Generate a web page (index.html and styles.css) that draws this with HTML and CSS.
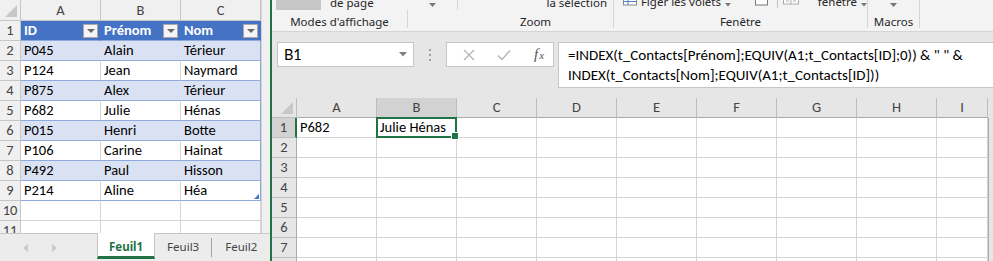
FILE: index.html
```html
<!DOCTYPE html>
<html lang="fr">
<head>
  <meta charset="UTF-8" />
  <meta name="viewport" content="width=device-width, initial-scale=1.0" />
  <title>t_Contacts - Excel</title>
  <link rel="stylesheet" href="styles.css">
</head>
<body>
  <div class="app">

    <!-- fenêtre de gauche : le tableau t_Contacts -->
    <section class="win-left">
      <div class="sheet">
        <div class="grid-left">
          <div class="corner"></div>
          <div class="colhead">A</div>
          <div class="colhead">B</div>
          <div class="colhead">C</div>

          <div class="rowhead">1</div>
          <div class="th">ID<span class="filter"></span></div>
          <div class="th">Prénom<span class="filter"></span></div>
          <div class="th">Nom<span class="filter"></span></div>

          <div class="rowhead">2</div>
          <div class="td band">P045</div><div class="td band">Alain</div><div class="td band last">Térieur</div>
          <div class="rowhead">3</div>
          <div class="td">P124</div><div class="td">Jean</div><div class="td last">Naymard</div>
          <div class="rowhead">4</div>
          <div class="td band">P875</div><div class="td band">Alex</div><div class="td band last">Térieur</div>
          <div class="rowhead">5</div>
          <div class="td">P682</div><div class="td">Julie</div><div class="td last">Hénas</div>
          <div class="rowhead">6</div>
          <div class="td band">P015</div><div class="td band">Henri</div><div class="td band last">Botte</div>
          <div class="rowhead">7</div>
          <div class="td">P106</div><div class="td">Carine</div><div class="td last">Hainat</div>
          <div class="rowhead">8</div>
          <div class="td band">P492</div><div class="td band">Paul</div><div class="td band last">Hisson</div>
          <div class="rowhead">9</div>
          <div class="td">P214</div><div class="td">Aline</div><div class="td last resize">Héa</div>

          <div class="rowhead">10</div>
          <div class="cell"></div><div class="cell"></div><div class="cell"></div>
          <div class="rowhead">11</div>
          <div class="cell"></div><div class="cell"></div><div class="cell"></div>
        </div>
        <div class="vstrip"></div>
      </div>

      <div class="tabs">
        <div class="tab-nav">
          <svg width="6" height="8" viewBox="0 0 6 8"><path d="M5 0 L0 4 L5 8 Z" fill="#c8c8c8"/></svg>
          <svg width="6" height="8" viewBox="0 0 6 8"><path d="M1 0 L6 4 L1 8 Z" fill="#c8c8c8"/></svg>
        </div>
        <div class="tab active">Feuil1</div>
        <div class="tab">Feuil3</div>
        <div class="tab sep">Feuil2</div>
      </div>
    </section>

    <!-- fenêtre de droite -->
    <section class="win-right">
      <div class="ribbon">
        <div class="group g-modes">
          <div class="group-body">
            <span class="icon-bottom"></span>
            <span class="rtext">de page</span>
          </div>
          <div class="group-label short-sep">Modes d'affichage</div>
        </div>
        <div class="group g-more">
          <div class="group-body centered">
            <svg width="7" height="4" viewBox="0 0 7 4"><path d="M0 0 H7 L3.5 4 Z" fill="#777"/></svg>
          </div>
          <div class="group-label"></div>
        </div>
        <div class="group g-zoom">
          <div class="group-body end">
            <span class="rtext">la sélection</span>
          </div>
          <div class="group-label">Zoom</div>
        </div>
        <div class="group g-window">
          <div class="group-body">
            <svg class="freeze" width="16" height="10" viewBox="0 0 16 10">
              <rect x="1.5" y="-4" width="13" height="9" fill="#fff" stroke="#888"/>
              <path d="M1.5 1.5 H14.5 M6 -4 V5" stroke="#4a7fc1"/>
            </svg>
            <span class="rtext">Figer les volets</span>
            <svg class="caret" width="6" height="4" viewBox="0 0 6 4"><path d="M0 0 H6 L3 3.5 Z" fill="#777"/></svg>
            <svg class="split" width="13" height="8" viewBox="0 0 13 8"><rect x="0.5" y="-4" width="12" height="9" fill="#fff" stroke="#777"/></svg>
            <span class="vbar"></span>
            <svg class="side" width="16" height="8" viewBox="0 0 16 8">
              <rect x="0.5" y="-3" width="15" height="7" fill="#fff" stroke="#aaa"/>
              <path d="M8 -3 V4 M3 1 H6 M10 1 H13" stroke="#aaa"/>
            </svg>
            <span class="rtext win-list">fenêtre</span>
            <svg class="caret" width="6" height="4" viewBox="0 0 6 4"><path d="M0 0 H6 L3 3.5 Z" fill="#777"/></svg>
          </div>
          <div class="group-label">Fenêtre</div>
        </div>
        <div class="group g-macros">
          <div class="group-body centered">
            <svg width="7" height="4" viewBox="0 0 7 4"><path d="M0 0 H7 L3.5 4 Z" fill="#777"/></svg>
          </div>
          <div class="group-label">Macros</div>
        </div>
        <div class="group g-rest">
          <div class="group-body"></div>
          <div class="group-label"></div>
        </div>
      </div>

      <div class="formula-bar">
        <div class="name-box">
          <span>B1</span>
          <svg width="8" height="5" viewBox="0 0 8 5"><path d="M0 0 H8 L4 4.5 Z" fill="#808080"/></svg>
        </div>
        <div class="grip"><i></i><i></i><i></i></div>
        <div class="fx-buttons">
          <svg width="12" height="12" viewBox="0 0 12 12"><path d="M1 1 L11 11 M11 1 L1 11" stroke="#b4b4b4" stroke-width="1.3"/></svg>
          <svg width="14" height="12" viewBox="0 0 14 12"><path d="M1 6.5 L5 10.5 L13 1.5" stroke="#b4b4b4" stroke-width="1.4" fill="none"/></svg>
          <span class="fx"><i>f</i><i>x</i></span>
        </div>
        <div class="formula">=INDEX(t_Contacts[Prénom];EQUIV(A1;t_Contacts[ID];0)) &amp; " " &amp;<br>INDEX(t_Contacts[Nom];EQUIV(A1;t_Contacts[ID]))</div>
      </div>

      <div class="sheet-right">
        <div class="grid-right">
          <div class="corner"></div>
          <div class="colhead">A</div>
          <div class="colhead sel">B</div>
          <div class="colhead">C</div>
          <div class="colhead">D</div>
          <div class="colhead">E</div>
          <div class="colhead">F</div>
          <div class="colhead">G</div>
          <div class="colhead">H</div>
          <div class="colhead">I</div>

          <div class="rowhead sel">1</div>
          <div class="cell">P682</div>
          <div class="cell active">Julie Hénas</div>
          <div class="cell"></div><div class="cell"></div><div class="cell"></div><div class="cell"></div>
          <div class="cell"></div><div class="cell"></div><div class="cell"></div>
        </div>
        <div class="vstrip-right"></div>
      </div>
    </section>

  </div>

  <script>
    // lignes vides 2 à 8 de la feuille de droite
    const grid = document.querySelector('.grid-right');
    for (let r = 2; r <= 8; r++) {
      let head = document.createElement('div');
      head.className = 'rowhead';
      head.textContent = r;
      grid.appendChild(head);
      for (let c = 0; c < 9; c++) {
        let cell = document.createElement('div');
        cell.className = 'cell';
        grid.appendChild(cell);
      }
    }
  </script>
</body>
</html>
```

FILE: styles.css
```css
* {
  box-sizing: border-box;
}

body {
  margin: 0;
  width: 993px;
  height: 261px;
  overflow: hidden;
  background-color: #e6e6e6;
  font-family: "Carlito", "Lato", sans-serif;
  color: #000;
}

.app {
  display: flex;
  height: 261px;
}

/* ---------- fenêtre de gauche ---------- */

.win-left {
  width: 270px;
  display: flex;
  flex-direction: column;
  background-color: #fff;
}

.sheet {
  display: flex;
  height: 233px;
  overflow: hidden;
}

.grid-left {
  display: grid;
  grid-template-columns: 21px repeat(3, 80px);
  grid-template-rows: 21px;
  grid-auto-rows: 20px;
  font-size: 14.5px;
}

.vstrip {
  width: 9px;
  background-color: #f0f0f0;
  border-left: 1px solid #d4d4d4;
}

.corner {
  position: relative;
  background-color: #f0f0f0;
  border-right: 1px solid #c6c6c6;
  border-bottom: 1px solid #c6c6c6;
}

.corner::after {
  content: "";
  position: absolute;
  right: 3px;
  bottom: 3px;
  border-left: 12px solid transparent;
  border-bottom: 12px solid #c8c8c8;
}

.colhead,
.rowhead {
  background-color: #f0f0f0;
  color: #444;
  border-right: 1px solid #c6c6c6;
  border-bottom: 1px solid #c6c6c6;
  text-align: center;
  line-height: 20px;
}

.rowhead {
  line-height: 19px;
}

.th,
.td,
.cell {
  position: relative;
  padding-left: 3px;
  line-height: 19px;
  white-space: nowrap;
  background-color: #fff;
  border-right: 1px solid #d4d4d4;
  border-bottom: 1px solid #d4d4d4;
}

.th {
  background-color: #4472c4;
  color: #fff;
  font-weight: bold;
  border-right-color: #4472c4;
  border-bottom-color: #8ea9db;
}

.th .filter {
  position: absolute;
  right: 2px;
  top: 3px;
  width: 15px;
  height: 14px;
  background-color: #f4f4f4;
  border: 1px solid #a8a8a8;
}

.th .filter::after {
  content: "";
  position: absolute;
  left: 3px;
  top: 4px;
  border-left: 4px solid transparent;
  border-right: 4px solid transparent;
  border-top: 4px solid #666;
}

.td {
  border-bottom-color: #8ea9db;
}

.td.band {
  background-color: #d9e1f2;
  border-right-color: #d9e1f2;
}

.td.last {
  border-right-color: #8ea9db;
}

.td.resize::after {
  content: "";
  position: absolute;
  right: 1px;
  bottom: 1px;
  border-left: 5px solid transparent;
  border-bottom: 5px solid #4472c4;
}

.tabs {
  display: flex;
  height: 28px;
  background-color: #ececec;
  border-top: 1px solid #c6c6c6;
  font-family: "Noto Sans", sans-serif;
  font-size: 11.5px;
  color: #444;
}

.tab-nav {
  display: flex;
  align-items: center;
  gap: 22px;
  width: 97px;
  padding-left: 23px;
}

.tab {
  padding: 4px 12px 0;
  line-height: 18px;
}

.tab.active {
  margin-top: -1px;
  padding: 5px 11px 0;
  background-color: #fff;
  border-left: 1px solid #c6c6c6;
  border-right: 1px solid #c6c6c6;
  border-bottom: 3px solid #217346;
  color: #217346;
  font-weight: bold;
  height: 26px;
}

.tab.sep {
  position: relative;
  padding-left: 14px;
}

.tab.sep::before {
  content: "";
  position: absolute;
  left: 0;
  top: 4px;
  height: 19px;
  border-left: 1px solid #a0a0a0;
}

/* ---------- fenêtre de droite ---------- */

.win-right {
  flex: 1;
  display: flex;
  flex-direction: column;
  border-left: 2px solid #217346;
  background-color: #e6e6e6;
}

.ribbon {
  display: flex;
  height: 32px;
  background-color: #f3f3f3;
  border-bottom: 1px solid #d5d5d5;
  font-family: "Noto Sans", sans-serif;
  font-size: 11.5px;
  color: #262626;
}

.group {
  display: flex;
  flex-direction: column;
}

.group-body {
  display: flex;
  align-items: flex-end;
  height: 10px;
  border-right: 1px solid #d5d5d5;
}

.group-body.centered {
  justify-content: center;
  align-items: flex-start;
  padding-top: 3px;
}

.group-body.end {
  justify-content: flex-end;
  padding-right: 6px;
}

.group-label {
  height: 18px;
  padding-top: 5px;
  line-height: 13px;
  text-align: center;
  border-right: 1px solid #d5d5d5;
}

.g-modes { width: 136px; }
.g-modes .group-body { border-right: none; }
.g-more { width: 50px; }
.g-more .group-label { border-right: none; }
.g-zoom { width: 156px; }
.g-window { width: 254px; }
.g-macros { width: 52px; }
.g-rest { flex: 1; }
.g-rest .group-body,
.g-rest .group-label { border-right: none; }

.rtext {
  line-height: 15px;
  white-space: nowrap;
}

.icon-bottom {
  align-self: flex-start;
  width: 45px;
  height: 10px;
  margin: 0 9px 0 4px;
  background-color: #c6c6c6;
}

.g-window .group-body {
  align-items: flex-start;
}

.g-window .rtext {
  margin-top: -6px;
}

.freeze {
  margin: 0 3px 0 8px;
}

.caret {
  margin: 3px 0 0 4px;
}

.split {
  margin-left: 24px;
}

.vbar {
  width: 1px;
  height: 8px;
  margin: 0 5px 0 9px;
  background-color: #c6c6c6;
}

.side {
  margin-right: 19px;
}

/* barre de formule */

.formula-bar {
  display: flex;
  align-items: flex-start;
  height: 66px;
  padding: 10px 0 0 5px;
  font-family: "Noto Sans", sans-serif;
}

.name-box {
  display: flex;
  align-items: center;
  justify-content: space-between;
  width: 137px;
  height: 25px;
  padding: 0 6px 0 6px;
  background-color: #fff;
  border: 1px solid #c6c6c6;
  font-family: "Lato", sans-serif;
  font-size: 14.5px;
}

.grip {
  display: flex;
  flex-direction: column;
  gap: 3px;
  width: 32px;
  padding: 7px 0 0 15px;
}

.grip i {
  width: 2px;
  height: 2px;
  background-color: #a0a0a0;
}

.fx-buttons {
  display: flex;
  align-items: center;
  width: 108px;
  height: 25px;
  padding-left: 16px;
  gap: 22px;
  background-color: #fff;
  border: 1px solid #c6c6c6;
}

.fx {
  margin-left: 1px;
  font-family: "Liberation Serif", serif;
  font-size: 15px;
  color: #555;
}

.fx i + i {
  font-size: 11px;
  margin-left: 1px;
}

.formula {
  flex: 1;
  height: 46px;
  margin-left: 4px;
  padding: 2px 0 0 9px;
  background-color: #fff;
  border: 1px solid #c6c6c6;
  border-right: none;
  font-family: "Carlito", "Lato", sans-serif;
  font-size: 15px;
  line-height: 20px;
  white-space: nowrap;
  overflow: hidden;
}

/* grille de droite */

.sheet-right {
  display: flex;
  flex: 1;
  overflow: hidden;
}

.grid-right {
  display: grid;
  grid-template-columns: 25px repeat(8, 80px) 51px;
  grid-template-rows: 20px;
  grid-auto-rows: 20px;
  font-size: 14.5px;
}

.grid-right .corner,
.grid-right .colhead,
.grid-right .rowhead {
  background-color: #e6e6e6;
  border-color: #bdbdbd;
}

.grid-right .colhead {
  border-bottom-color: #ababab;
  line-height: 19px;
}

.grid-right .colhead:last-of-type {
  border-right: none;
}

.grid-right .rowhead {
  border-right-color: #ababab;
}

.grid-right .colhead.sel,
.grid-right .rowhead.sel {
  background-color: #d2d2d2;
}

.grid-right .rowhead.sel {
  border-right: 2px solid #217346;
}

.grid-right .cell {
  border-color: #d4d4d4;
}

.cell.active::after {
  content: "";
  position: absolute;
  left: -1px;
  top: -1px;
  right: -1px;
  bottom: -1px;
  border: 2px solid #217346;
}

.cell.active::before {
  content: "";
  position: absolute;
  right: -3px;
  bottom: -3px;
  width: 6px;
  height: 6px;
  background-color: #217346;
  border: 1px solid #fff;
  z-index: 1;
}

.vstrip-right {
  flex: 1;
  border-left: 1px solid #ababab;
  margin-top: 20px;
}
```
